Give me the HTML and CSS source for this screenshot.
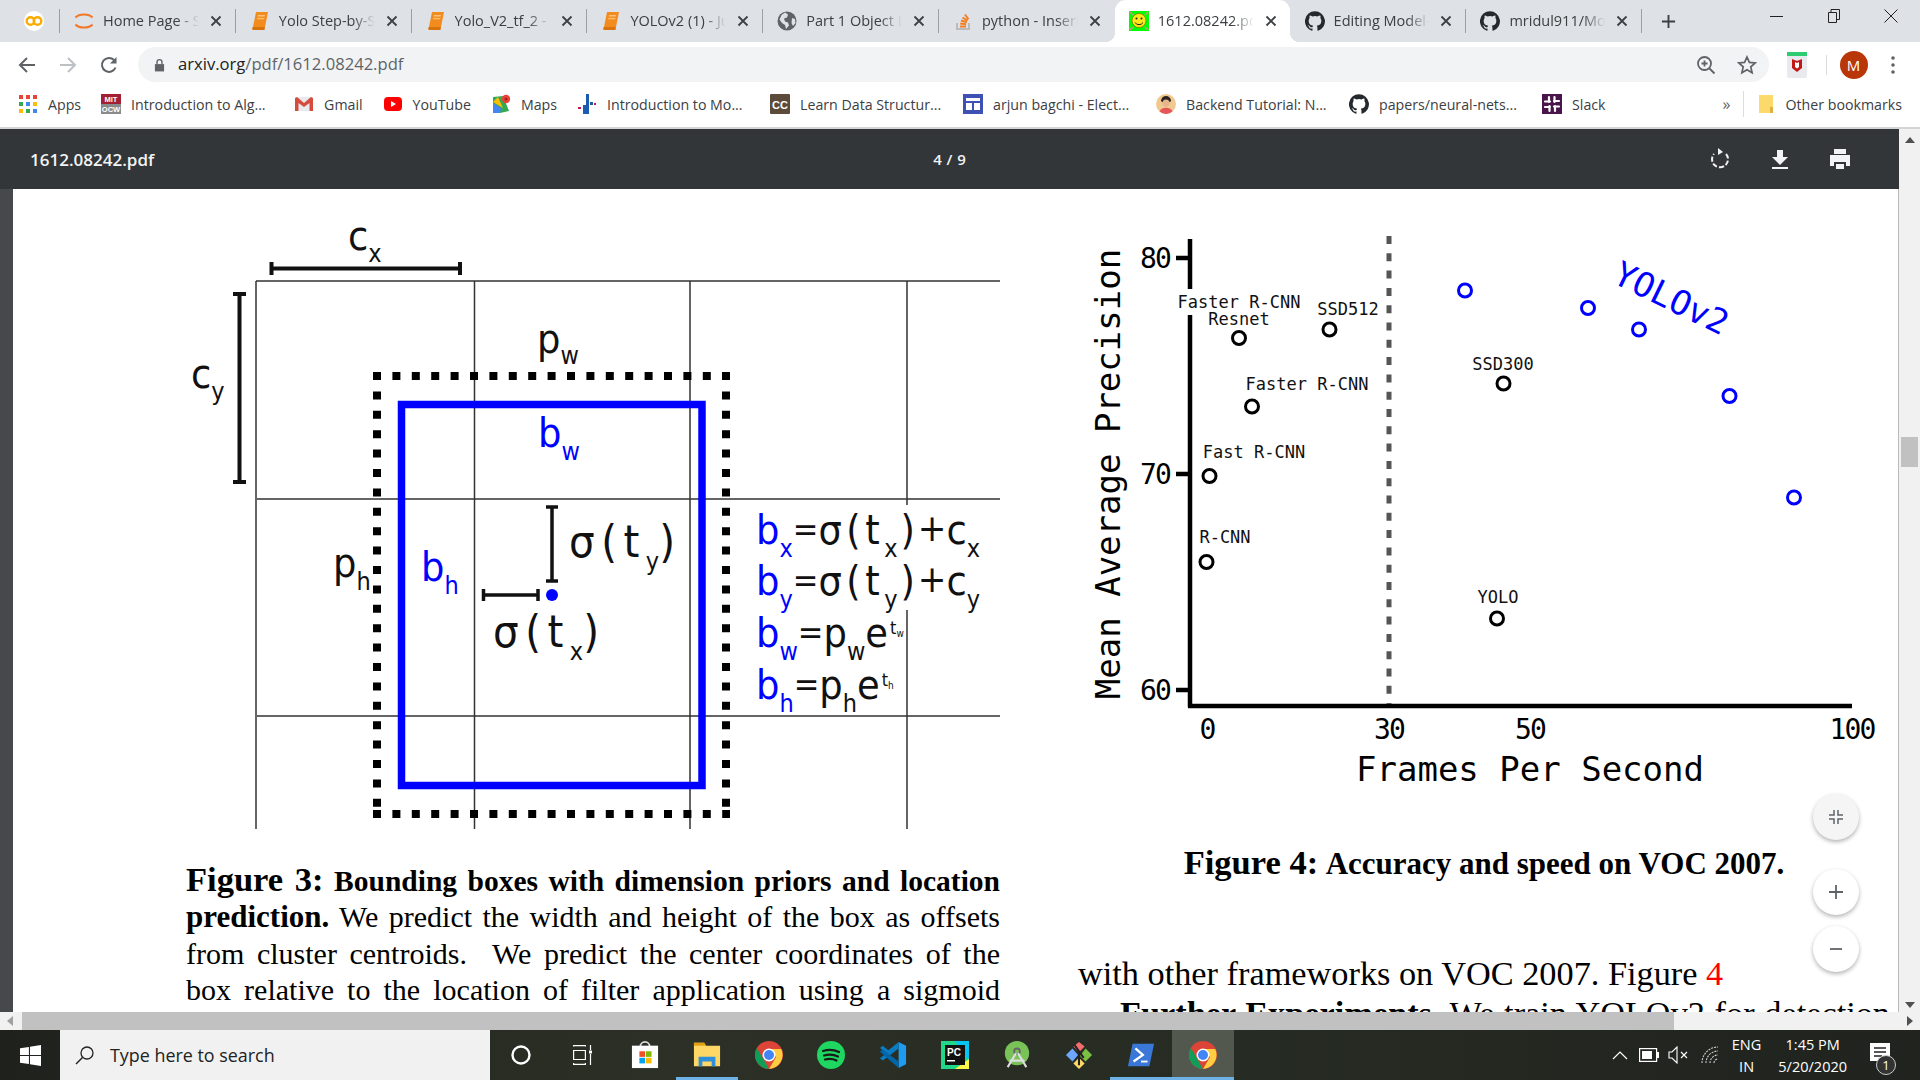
FILE: index.html
```html
<!DOCTYPE html>
<html lang="en">

<head>
    <meta charset="UTF-8">
    <meta name="viewport" content="width=device-width, initial-scale=1.0">
    <title>1612.08242.pdf</title>
    <link rel="stylesheet" href="styles.css">
</head>

<body>
    <svg class="defs" aria-hidden="true">
        <symbol id="gh" viewBox="0 0 24 24">
            <path fill="#24292e" d="M12 .3a12 12 0 0 0-3.8 23.4c.6.1.8-.3.8-.6v-2c-3.3.7-4-1.6-4-1.6-.5-1.4-1.3-1.8-1.3-1.8-1.1-.7.1-.7.1-.7 1.2.1 1.8 1.2 1.8 1.2 1.1 1.8 2.8 1.3 3.5 1 .1-.8.4-1.3.8-1.6-2.7-.3-5.5-1.3-5.5-5.9 0-1.3.5-2.4 1.2-3.2-.1-.3-.5-1.5.1-3.2 0 0 1-.3 3.3 1.2a11.5 11.5 0 0 1 6 0c2.3-1.5 3.3-1.2 3.3-1.2.6 1.7.2 2.9.1 3.2.8.8 1.2 1.9 1.2 3.2 0 4.6-2.8 5.6-5.5 5.9.4.4.8 1.1.8 2.2v3.3c0 .3.2.7.8.6A12 12 0 0 0 12 .3"/>
        </symbol>
        <symbol id="book" viewBox="0 0 20 20">
            <path fill="#f28c1e" d="M6 1h12l-3 15H3z"/>
            <path fill="#ffc27a" d="M8 4h7l-.3 1.500H7.700zM7.400 7h7l-.3 1.200H7.100z"/>
            <path fill="#d9730d" d="M3 16h12l-.5 3H3.500a1.600 1.600 0 0 1 -.5-3z"/>
        </symbol>
        <symbol id="chrome" viewBox="0 0 28 28">
            <circle cx="14" cy="14" r="14" fill="#db4437"/>
            <path fill="#0f9d58" d="M14 28A14 14 0 0 1 1.900 7l7 12 5 9z"/>
            <path fill="#ffcd40" d="M14 8h12.200A14 14 0 0 1 14 28l7-12z"/>
            <circle cx="14" cy="14" r="6.500" fill="#fff"/>
            <circle cx="14" cy="14" r="5" fill="#4285f4"/>
        </symbol>
        <symbol id="closex" viewBox="0 0 12 12">
            <path d="M1.500 1.500l9 9M10.500 1.500l-9 9" stroke="#3c4043" stroke-width="1.800" fill="none"/>
        </symbol>
    </svg>

    <div class="tabstrip">
        <div class="pinned">
            <svg class="tabicon" viewBox="0 0 20 20"><circle cx="10" cy="10" r="10" fill="#fff"/><circle cx="6.500" cy="10" r="3.800" fill="none" stroke="#f9ab00" stroke-width="2.400"/><circle cx="13.500" cy="10" r="3.800" fill="none" stroke="#f9ab00" stroke-width="2.400"/></svg>
        </div>
        <div class="tabsep"></div>
        <div class="tab">
            <svg class="tabicon" viewBox="0 0 20 20"><path d="M1.500 6.500a9.500 5.500 0 0 1 17 0M1.500 13.500a9.500 5.500 0 0 0 17 0" fill="none" stroke="#f37726" stroke-width="2"/></svg>
            <span class="tabtitle">Home Page - S</span>
            <svg class="tabclose"><use href="#closex"/></svg>
        </div>
        <div class="tabsep"></div>
        <div class="tab">
            <svg class="tabicon"><use href="#book"/></svg>
            <span class="tabtitle">Yolo Step-by-S</span>
            <svg class="tabclose"><use href="#closex"/></svg>
        </div>
        <div class="tabsep"></div>
        <div class="tab">
            <svg class="tabicon"><use href="#book"/></svg>
            <span class="tabtitle">Yolo_V2_tf_2 -</span>
            <svg class="tabclose"><use href="#closex"/></svg>
        </div>
        <div class="tabsep"></div>
        <div class="tab">
            <svg class="tabicon"><use href="#book"/></svg>
            <span class="tabtitle">YOLOv2 (1) - Ju</span>
            <svg class="tabclose"><use href="#closex"/></svg>
        </div>
        <div class="tabsep"></div>
        <div class="tab">
            <svg class="tabicon" viewBox="0 0 20 20"><circle cx="10" cy="10" r="9.500" fill="#5f6368"/><path fill="#dee1e6" d="M8 1.500l3 2-1 3-3 1 1 3 3 1 1 3-3 3.500-1-4-3-2-2.500-3.500 2-4.500zM15 7l3 1 .5 4-2.500 3-1.500-3z"/></svg>
            <span class="tabtitle">Part 1 Object D</span>
            <svg class="tabclose"><use href="#closex"/></svg>
        </div>
        <div class="tabsep"></div>
        <div class="tab">
            <svg class="tabicon" viewBox="0 0 20 20"><path fill="none" stroke="#bcbbbb" stroke-width="2" d="M4 12v6h12v-6"/><path fill="none" stroke="#f48024" stroke-width="2" d="M7 15.500h6M7.200 12.500l6 .8M8 9.500l5.800 1.800M9.500 6.500l5 3.200M12 3.500l3.500 4.800"/></svg>
            <span class="tabtitle">python - Insert</span>
            <svg class="tabclose"><use href="#closex"/></svg>
        </div>
        <div class="tabsep tabsep-off"></div>
        <div class="tab tab-active">
            <svg class="tabicon" viewBox="0 0 20 20"><rect width="20" height="20" fill="#0f0"/><circle cx="10" cy="9.500" r="7" fill="#ffe81a" stroke="#8a7a00" stroke-width=".8"/><circle cx="7.500" cy="7.500" r="1" fill="#222"/><circle cx="12.500" cy="7.500" r="1" fill="#222"/><path d="M6 11.500a4.500 4 0 0 0 8 0" fill="none" stroke="#222" stroke-width="1"/><path d="M1 1l3 3M19 1l-3 3M1 19l3-3M19 19l-3-3" stroke="#c98" stroke-width="1.500"/></svg>
            <span class="tabtitle">1612.08242.pd</span>
            <svg class="tabclose"><use href="#closex"/></svg>
        </div>
        <div class="tabsep tabsep-off"></div>
        <div class="tab">
            <svg class="tabicon"><use href="#gh"/></svg>
            <span class="tabtitle">Editing Model-</span>
            <svg class="tabclose"><use href="#closex"/></svg>
        </div>
        <div class="tabsep"></div>
        <div class="tab">
            <svg class="tabicon"><use href="#gh"/></svg>
            <span class="tabtitle">mridul911/Mo</span>
            <svg class="tabclose"><use href="#closex"/></svg>
        </div>
        <div class="tabsep"></div>
        <svg class="newtab" viewBox="0 0 16 16"><path d="M8 1v14M1 8h14" stroke="#3c4043" stroke-width="2"/></svg>
        <div class="winctl">
            <svg viewBox="0 0 14 14"><path d="M0 7.500h13" stroke="#222" stroke-width="1"/></svg>
            <svg viewBox="0 0 14 14"><path d="M1.500 3.500h8v10h-8zM4 3.500V.5h8.500v10H9.500" fill="none" stroke="#222" stroke-width="1"/></svg>
            <svg viewBox="0 0 14 14"><path d="M.5.500l13 13M13.500.5l-13 13" stroke="#222" stroke-width="1"/></svg>
        </div>
    </div>

    <div class="toolbar">
        <svg class="navicon" viewBox="0 0 18 18"><path d="M17 9H2M9 2L2 9l7 7" fill="none" stroke="#5f6368" stroke-width="2"/></svg>
        <svg class="navicon" viewBox="0 0 18 18"><path d="M1 9h15M9 2l7 7-7 7" fill="none" stroke="#bdc1c6" stroke-width="2"/></svg>
        <svg class="navicon" viewBox="0 0 18 18"><path d="M15.500 11.500A7 7 0 1 1 14 4" fill="none" stroke="#5f6368" stroke-width="2"/><path d="M16.500 1v6.500H10z" fill="#5f6368"/></svg>
        <div class="omnibox">
            <svg class="lock" viewBox="0 0 12 14"><path d="M1 6h10v8H1z" fill="#5f6368"/><path d="M3.300 6V3.800a2.700 2.700 0 0 1 5.400 0V6" fill="none" stroke="#5f6368" stroke-width="1.500"/></svg>
            <span class="url"><span class="url-host">arxiv.org</span>/pdf/1612.08242.pdf</span>
            <svg class="omniicon zoomicon" viewBox="0 0 20 20"><circle cx="8.500" cy="8.500" r="6.500" fill="none" stroke="#5f6368" stroke-width="1.800"/><path d="M13 13l5.500 5.500M8.500 5.500v6M5.500 8.500h6" stroke="#5f6368" stroke-width="1.800"/></svg>
            <svg class="omniicon" viewBox="0 0 20 20"><path d="M10 2l2.400 5.400 5.800.6-4.400 3.900 1.300 5.800L10 14.700l-5.100 3 1.300-5.800L1.800 8l5.800-.6z" fill="none" stroke="#5f6368" stroke-width="1.700"/></svg>
        </div>
        <svg class="mcafee" viewBox="0 0 20 26"><rect width="20" height="26" rx="2" fill="#e8eaed"/><rect width="20" height="4" fill="#2ecc71"/><path d="M5 7l5 2 5-2v9l-5 4-5-4z" fill="#c01818"/><path d="M8 10v5l2 1.500 2-1.500v-5l-2 1z" fill="#fff"/></svg>
        <div class="toolsep"></div>
        <div class="avatar">M</div>
        <svg class="dots" viewBox="0 0 4 18"><circle cx="2" cy="2" r="1.800" fill="#5f6368"/><circle cx="2" cy="9" r="1.800" fill="#5f6368"/><circle cx="2" cy="16" r="1.800" fill="#5f6368"/></svg>
    </div>

    <div class="bookmarks">
        <a class="bm">
            <svg class="bmicon" viewBox="0 0 20 20">
                <g fill="#ea4335"><rect x="1" y="1" width="4" height="4"/><rect x="8" y="1" width="4" height="4"/><rect x="15" y="1" width="4" height="4"/></g>
                <g fill="#fbbc04"><rect x="15" y="8" width="4" height="4"/><rect x="1" y="15" width="4" height="4"/></g>
                <g fill="#34a853"><rect x="1" y="8" width="4" height="4"/><rect x="8" y="15" width="4" height="4"/></g>
                <g fill="#4285f4"><rect x="8" y="8" width="4" height="4"/><rect x="15" y="15" width="4" height="4"/></g>
            </svg>
            <span>Apps</span>
        </a>
        <a class="bm bm-long">
            <svg class="bmicon" viewBox="0 0 20 20"><rect width="20" height="10" fill="#a31f34"/><rect y="10" width="20" height="10" fill="#8a8b8c"/><text x="10" y="8" class="mit">MIT</text><text x="10" y="18" class="mit">OCW</text></svg>
            <span>Introduction to Alg...</span>
        </a>
        <a class="bm">
            <svg class="bmicon" viewBox="0 0 20 20"><path fill="#e8eaed" d="M2 3h16v14H2z"/><path fill="#d54c3f" d="M1 4v13h3.500V9l5.500 4 5.500-4v8H19V4l-2-1-7 6-7-6z"/></svg>
            <span>Gmail</span>
        </a>
        <a class="bm">
            <svg class="bmicon" viewBox="0 0 20 20"><rect x="1" y="3" width="18" height="14" rx="4" fill="#f00"/><path d="M8 7l5 3-5 3z" fill="#fff"/></svg>
            <span>YouTube</span>
        </a>
        <a class="bm">
            <svg class="bmicon" viewBox="0 0 20 20"><path fill="#34a853" d="M2 3l10-1 6 15-9 2-7-4z"/><path fill="#4285f4" d="M2 19V9l8 5-1 5z"/><path fill="#fbbc04" d="M2 8l5-5 5 11z"/><circle cx="15" cy="5" r="4.200" fill="#ea4335"/><circle cx="15" cy="5" r="1.500" fill="#a31f1f"/></svg>
            <span>Maps</span>
        </a>
        <a class="bm bm-long">
            <svg class="bmicon" viewBox="0 0 20 20"><rect x="9" y="0" width="3" height="20" fill="#1a5db0"/><rect x="6" y="11" width="3" height="9" fill="#1a5db0"/><rect x="13" y="8" width="3" height="3" fill="#1a5db0"/><rect x="1" y="13" width="3" height="2" fill="#c2185b"/><rect x="17" y="9" width="2" height="2" fill="#c2185b"/></svg>
            <span>Introduction to Mo...</span>
        </a>
        <a class="bm bm-long">
            <svg class="bmicon" viewBox="0 0 20 20"><rect width="20" height="20" rx="1" fill="#5c4a3a"/><text x="10" y="14.500" class="cc">CC</text></svg>
            <span>Learn Data Structur...</span>
        </a>
        <a class="bm bm-long">
            <svg class="bmicon" viewBox="0 0 20 20"><rect width="20" height="20" fill="#3f51b5"/><rect x="3" y="4" width="14" height="3" fill="#fff"/><rect x="3" y="9" width="6" height="7" fill="#fff"/><rect x="11" y="9" width="6" height="7" fill="#fff"/></svg>
            <span>arjun bagchi - Elect...</span>
        </a>
        <a class="bm bm-long">
            <svg class="bmicon" viewBox="0 0 20 20"><circle cx="10" cy="10" r="10" fill="#f0c890"/><path d="M5 7a5 5 0 0 1 10 0l-1 1H6z" fill="#2d2420"/><circle cx="10" cy="9" r="3.500" fill="#e8b48c"/><path d="M3.500 17.500a7 6 0 0 1 13 0 10 10 0 0 1-13 0" fill="#e5555a"/></svg>
            <span>Backend Tutorial: N...</span>
        </a>
        <a class="bm bm-long">
            <svg class="bmicon"><use href="#gh"/></svg>
            <span>papers/neural-nets...</span>
        </a>
        <a class="bm">
            <svg class="bmicon" viewBox="0 0 20 20"><rect width="20" height="20" fill="#4a154b"/><path d="M7 3v5M13 12v5M3 13h5M12 7h5M8 7.500H3M17 12.500h-5M7.500 17v-5M12.500 3v5" stroke="#fff" stroke-width="2.200" stroke-linecap="round"/></svg>
            <span>Slack</span>
        </a>
        <span class="bmmore">»</span>
        <div class="toolsep bmsep"></div>
        <a class="bm bm-other">
            <svg class="bmicon" viewBox="0 0 20 20"><path d="M3 1h7l7 0v18H3z" fill="#fbd96b"/><path d="M14 13h3v6h-3z" fill="#e0b040"/></svg>
            <span>Other bookmarks</span>
        </a>
    </div>
    <div class="chromeline"></div>

    <div class="viewerwrap">
        <div class="viewer">
            <div class="pdfbar">
                <span class="pdfname">1612.08242.pdf</span>
                <span class="pdfpage">4 / 9</span>
                <div class="pdfactions">
                    <svg viewBox="0 0 20 24"><path d="M16 7a8 8 0 1 1-12 0" fill="none" stroke="#f1f3f4" stroke-width="2" stroke-dasharray="5 2"/><path d="M8 1l5 4-5 3z" fill="#f1f3f4"/></svg>
                    <svg viewBox="0 0 20 24"><path d="M7 3h6v7h5l-8 8-8-8h5z" fill="#f1f3f4"/><rect x="2" y="20" width="16" height="2" fill="#f1f3f4"/></svg>
                    <svg viewBox="0 0 20 24"><path d="M4 2h12v5H4z" fill="#f1f3f4"/><path d="M0 8h20v11h-4v-4H4v4H0z" fill="#f1f3f4"/><path d="M6 17h8v5H6z" fill="#f1f3f4"/></svg>
                </div>
            </div>
            <div class="pagearea">
                <div class="page">
                    <div class="col col-left">
                        <svg class="fig fig3" viewBox="186 189 820 673">
                            <!-- grid -->
                            <g class="grid">
                                <path d="M256 281V829M474.500 281V829M690 281V829M907 281V505M907 610V829"/>
                                <path d="M256 281H1000M257 499H1000M257 716H1000"/>
                            </g>
                            <!-- brackets -->
                            <path class="bracket" d="M271.500 262v13M271.500 268.500H460M460 262v13M233 294h13M239.500 294V482M233 482h13"/>
                            <path class="bracket thin" d="M546 507h12M552 507V581M546 581h12M483.500 589v12M483.500 595H538M538 589v12"/>
                            <!-- prior and predicted box -->
                            <path class="prior" d="M373 376H730M373 814H730M377 372V818M726 372V818"/>
                            <rect class="pred" x="401.500" y="404.500" width="300.500" height="381"/>
                            <circle class="center" cx="552" cy="595" r="6"/>

                            <text class="m" x="348" y="250">c<tspan class="s" dy="12">x</tspan></text>
                            <text class="m" x="191" y="388">c<tspan class="s" dy="12">y</tspan></text>
                            <text class="m" x="537" y="353">p<tspan class="s" dy="11">w</tspan></text>
                            <text class="m blue" x="538" y="447">b<tspan class="s" dy="13">w</tspan></text>
                            <text class="m" x="333" y="577">p<tspan class="s" dy="13">h</tspan></text>
                            <text class="m blue" x="421" y="581">b<tspan class="s" dy="13">h</tspan></text>
                            <text class="m big" x="569" y="557">σ(t<tspan class="s" dy="13">y</tspan><tspan dy="-13">)</tspan></text>
                            <text class="m big" x="493" y="647">σ(t<tspan class="s" dy="13">x</tspan><tspan dy="-13">)</tspan></text>

                            <text class="m" x="756" y="544"><tspan class="blue">b</tspan><tspan class="s blue" dy="13">x</tspan><tspan class="op" dy="-16">=</tspan><tspan class="sp" dy="3">σ(t</tspan><tspan class="s" dy="13">x</tspan><tspan dx="3" dy="-13">)</tspan><tspan class="op plus" dx="3" dy="-3">+</tspan><tspan dy="3">c</tspan><tspan class="s" dy="13">x</tspan></text>
                            <text class="m" x="756" y="595"><tspan class="blue">b</tspan><tspan class="s blue" dy="13">y</tspan><tspan class="op" dy="-16">=</tspan><tspan class="sp" dy="3">σ(t</tspan><tspan class="s" dy="13">y</tspan><tspan dx="3" dy="-13">)</tspan><tspan class="op plus" dx="3" dy="-3">+</tspan><tspan dy="3">c</tspan><tspan class="s" dy="13">y</tspan></text>
                            <text class="m" x="756" y="647"><tspan class="blue">b</tspan><tspan class="s blue" dy="13">w</tspan><tspan class="op" dy="-16">=</tspan><tspan dy="3">p</tspan><tspan class="s" dy="13">w</tspan><tspan dy="-13">e</tspan><tspan class="e" dx="2" dy="-13">t</tspan><tspan class="ee" dy="3">w</tspan></text>
                            <text class="m" x="756" y="699"><tspan class="blue">b</tspan><tspan class="s blue" dy="13">h</tspan><tspan class="op" dy="-16">=</tspan><tspan dy="3">p</tspan><tspan class="s" dy="13">h</tspan><tspan dy="-13">e</tspan><tspan class="e" dx="2" dy="-13">t</tspan><tspan class="ee" dy="3">h</tspan></text>
                        </svg>
                        <p class="caption cap3">
                            <span class="ln"><b class="figlabel">Figure 3:</b> <b class="figtitle">Bounding boxes with dimension priors and location</b></span>
                            <span class="ln"><b class="lead">prediction.</b> We predict the width and height of the box as offsets</span>
                            <span class="ln">from cluster centroids. &nbsp;We predict the center coordinates of the</span>
                            <span class="ln">box relative to the location of filter application using a sigmoid</span>
                        </p>
                    </div>
                    <div class="col col-right">
                        <svg class="fig fig4" viewBox="1078 189 820 656">
                            <path class="axis" d="M1190 239V707M1188 706H1852M1176 258H1190M1176 474H1190M1176 690H1190"/>
                            <path class="dash" d="M1389 236V704"/>
                            <rect class="erase" x="1178" y="289" width="124" height="26"/>

                            <text class="tick" x="1155" y="268">80</text>
                            <text class="tick" x="1155" y="484">70</text>
                            <text class="tick" x="1155" y="700">60</text>
                            <text class="tick" x="1207" y="739">0</text>
                            <text class="tick" x="1389" y="739">30</text>
                            <text class="tick" x="1530" y="739">50</text>
                            <text class="tick" x="1852" y="739">100</text>
                            <text class="axlabel" x="1530" y="781">Frames Per Second</text>
                            <text class="axlabel" transform="translate(1120 474) rotate(-90)">Mean Average Precision</text>

                            <text class="lbl" x="1239" y="308">Faster R-CNN</text>
                            <text class="lbl" x="1239" y="325">Resnet</text>
                            <text class="lbl" x="1348" y="315">SSD512</text>
                            <text class="lbl" x="1503" y="370">SSD300</text>
                            <text class="lbl" x="1307" y="390">Faster R-CNN</text>
                            <text class="lbl" x="1254" y="458">Fast R-CNN</text>
                            <text class="lbl" x="1225" y="543">R-CNN</text>
                            <text class="lbl" x="1498" y="603">YOLO</text>

                            <g class="pts">
                                <circle cx="1239" cy="338" r="6.500"/>
                                <circle cx="1329.500" cy="329.500" r="6.500"/>
                                <circle cx="1252" cy="406.500" r="6.500"/>
                                <circle cx="1209.500" cy="476" r="6.500"/>
                                <circle cx="1206.500" cy="562" r="6.500"/>
                                <circle cx="1503.500" cy="383.500" r="6.500"/>
                                <circle cx="1497" cy="618.500" r="6.500"/>
                            </g>
                            <g class="pts pts-blue">
                                <circle cx="1465" cy="290.500" r="6.500"/>
                                <circle cx="1588" cy="308" r="6.500"/>
                                <circle cx="1639" cy="329.500" r="6.500"/>
                                <circle cx="1729.500" cy="396" r="6.500"/>
                                <circle cx="1794" cy="497.500" r="6.500"/>
                            </g>
                            <text class="yolo2" transform="translate(1611 282) rotate(26)">YOLOv2</text>
                        </svg>
                        <p class="caption cap4"><b class="figlabel">Figure 4:</b> <b class="figtitle">Accuracy and speed on VOC 2007.</b></p>
                        <p class="bodytext">with other frameworks on VOC 2007. Figure <span class="ref">4</span></p>
                        <p class="bodytext further"><b>Further Experiments.</b> We train YOLOv2 for detection</p>
                    </div>
                </div>
                <div class="fabs">
                    <div class="fab fab-fit"><svg viewBox="0 0 16 16"><path d="M6 1v5H1M10 1v5h5M6 15v-5H1M10 15v-5h5" fill="none" stroke="#5f6368" stroke-width="1.500"/></svg></div>
                    <div class="fab fab-plus"><svg viewBox="0 0 16 16"><path d="M8 1v14M1 8h14" stroke="#5f6368" stroke-width="1.800"/></svg></div>
                    <div class="fab fab-minus"><svg viewBox="0 0 16 16"><path d="M2 8h12" stroke="#5f6368" stroke-width="1.800"/></svg></div>
                </div>
            </div>
        </div>
        <div class="vscroll">
            <div class="arrow-up"></div>
            <div class="vthumb"></div>
            <div class="arrow-down"></div>
        </div>
    </div>

    <div class="hscroll">
        <div class="arrow-left"></div>
        <div class="hthumb"></div>
        <div class="arrow-right"></div>
    </div>

    <div class="taskbar">
        <div class="startbtn">
            <svg viewBox="0 0 20 20"><path fill="#fff" d="M0 3l8.500-1.200v7.700H0zM9.500 1.600L20 0v9.500H9.500zM0 10.500h8.500v7.700L0 17zM9.500 10.500H20V20L9.500 18.400z"/></svg>
        </div>
        <div class="searchbox">
            <svg viewBox="0 0 20 20"><circle cx="12" cy="8" r="6" fill="none" stroke="#222" stroke-width="1.300"/><path d="M7.500 12.500L1 19" stroke="#222" stroke-width="1.500"/></svg>
            <span>Type here to search</span>
        </div>
        <div class="taskicons">
            <div class="ti"><svg class="ti-s" viewBox="0 0 20 20"><circle cx="10" cy="10" r="8.500" fill="none" stroke="#fff" stroke-width="2.400"/></svg></div>
            <div class="ti"><svg class="ti-s" viewBox="0 0 20 20"><path fill="none" stroke="#fff" stroke-width="1.200" d="M0 .6h13M.6 0v1.500M12.400 0v1.500M.6 5.500h11.800v9H.6zM0 19.400h13M.6 18v1.400M12.400 18v1.400M17.500 0v5M17.500 9v11"/><rect x="16" y="5.500" width="3" height="3" fill="#fff"/></svg></div>
            <div class="ti"><svg class="ti-l" viewBox="0 0 30 30"><path d="M10 6a5 5 0 0 1 10 0" fill="none" stroke="#ddd" stroke-width="2"/><path d="M1 5h28v24H1z" fill="#fff"/><rect x="9" y="11" width="6" height="6" fill="#f25022"/><rect x="16" y="11" width="6" height="6" fill="#7fba00"/><rect x="9" y="18" width="6" height="6" fill="#00a4ef"/><rect x="16" y="18" width="6" height="6" fill="#ffb900"/></svg></div>
            <div class="ti ti-open"><svg class="ti-l" viewBox="0 0 30 30"><path d="M1 2h11l2 3h15v22H1z" fill="#ffd766"/><path d="M1 2h11l2 3H1z" fill="#e0a010"/><path d="M6 27V17h18v10h-4v-5H10v5z" fill="#2f8fd8"/></svg></div>
            <div class="ti"><svg class="ti-l"><use href="#chrome"/></svg></div>
            <div class="ti"><svg class="ti-l" viewBox="0 0 28 28"><circle cx="14" cy="14" r="14" fill="#1ed760"/><path d="M6 10c6-2 11-1.500 16 1M7 14.500c5-1.500 10-1 14 1M8 18.500c4-1 8-.8 11.500 1" fill="none" stroke="#1a1a1a" stroke-width="2.200" stroke-linecap="round"/></svg></div>
            <div class="ti"><svg class="ti-l" viewBox="0 0 30 30"><path d="M21 1l8 4v20l-8 4z" fill="#1f9cf0"/><path d="M21 1v7L10 16.500 4 21l-3-2.500 7-5.500-7-5.500L4 5l6 5z" fill="#0a7cc4"/><path d="M21 29v-7L4 9 1 11.500 21 29z" fill="#0065a9"/></svg></div>
            <div class="ti"><svg class="ti-l" viewBox="0 0 28 28"><path d="M0 0h28v28H0z" fill="#21d789"/><path d="M14 0h14v20z" fill="#07c3f2"/><path d="M28 18v10H14z" fill="#fcf84a"/><rect x="4" y="4" width="20" height="20" fill="#111"/><text x="6" y="14.500" class="pc">PC</text><rect x="6" y="19" width="8" height="1.500" fill="#fff"/></svg></div>
            <div class="ti"><svg class="ti-l" viewBox="0 0 30 30"><circle cx="15" cy="13" r="13" fill="#78c257"/><circle cx="15" cy="11" r="3" fill="none" stroke="#666" stroke-width="2"/><path d="M14 13L5 28M16 13l9 15M7 21h16" stroke="#ddd" stroke-width="2.200"/></svg></div>
            <div class="ti"><svg class="ti-l" viewBox="0 0 30 30"><path d="M15 1l6 5-6 6-6-6z" fill="#f46d6d"/><path d="M22 8l7 7-7 7-6-6z" fill="#7ac143"/><path d="M8 8l6 7-6 7-7-7z" fill="#6ea8fe"/><path d="M15 18l6 6-6 6-6-6z" fill="#ffd966"/><path d="M10 4l10 14M15 12v14" stroke="#222" stroke-width="2.200"/></svg></div>
            <div class="ti ti-open"><svg class="ti-l" viewBox="0 0 30 28"><path d="M6 2h23l-5 24H1z" fill="#3a78d8"/><path d="M9 7l8 7-10 7" fill="none" stroke="#fff" stroke-width="2.400"/><path d="M15 21h7" stroke="#fff" stroke-width="2"/></svg></div>
            <div class="ti ti-open ti-active"><svg class="ti-l"><use href="#chrome"/></svg></div>
        </div>
        <div class="tray">
            <svg class="caret" viewBox="0 0 16 10"><path d="M1 9l7-7 7 7" fill="none" stroke="#fff" stroke-width="1.200"/></svg>
            <svg class="battery" viewBox="0 0 20 14"><rect x=".6" y=".6" width="17" height="12.800" fill="none" stroke="#fff" stroke-width="1.200"/><rect x="3" y="3" width="10" height="8" fill="#fff"/><rect x="18" y="4" width="2" height="6" fill="#fff"/></svg>
            <svg class="speaker" viewBox="0 0 20 18"><path d="M1 6h3l5-5v16l-5-5H1z" fill="none" stroke="#fff" stroke-width="1.100"/><path d="M13 6l6 6M19 6l-6 6" stroke="#fff" stroke-width="1.100"/></svg>
            <svg class="wifi" viewBox="0 0 18 18"><path d="M1 17A16 16 0 0 1 17 1M5 17A12 12 0 0 1 17 5M9 17a8 8 0 0 1 8-8M13 17a4 4 0 0 1 4-4" fill="none" stroke="#ccc" stroke-width="1.100" stroke-dasharray="2 1"/></svg>
            <div class="lang"><span>ENG</span><span>IN</span></div>
            <div class="clock"><span>1:45 PM</span><span>5/20/2020</span></div>
            <div class="notif">
                <svg viewBox="0 0 20 20"><path d="M0 0h20v18H0z" fill="#fff"/><path d="M4 5h12M4 9h12M4 13h8" stroke="#222" stroke-width="1.400"/></svg>
                <span class="badge">1</span>
            </div>
        </div>
    </div>
</body>

</html>
```

FILE: styles.css
```css
* {
    box-sizing: border-box;
}

html,
body {
    margin: 0;
    padding: 0;
    width: 1920px;
    height: 1080px;
    overflow: hidden;
    font-family: "Open Sans", "Noto Sans", sans-serif;
    background: #fff;
}

.defs {
    width: 0;
    height: 0;
    display: block;
}

/* tabs */
.tabstrip {
    height: 42px;
    background: #dee1e6;
    display: flex;
    align-items: center;
}

.pinned {
    width: 59px;
    height: 42px;
    display: flex;
    align-items: center;
    padding-left: 24px;
}

.tab {
    width: 174.800px;
    height: 42px;
    display: flex;
    align-items: center;
    padding: 0 13px 0 14px;
    position: relative;
    flex: none;
}

.tabsep {
    width: 1px;
    height: 24px;
    background: #9aa0a6;
    flex: none;
}

.tabsep-off {
    background: transparent;
}

.tab-active {
    background: #fff;
    border-radius: 11px 11px 0 0;
}

.tab-active::before,
.tab-active::after {
    content: "";
    position: absolute;
    bottom: 0;
    width: 10px;
    height: 10px;
}

.tab-active::before {
    left: -10px;
    background: radial-gradient(circle at 0 0, transparent 10px, #fff 10.500px);
}

.tab-active::after {
    right: -10px;
    background: radial-gradient(circle at 100% 0, transparent 10px, #fff 10.500px);
}

.tabicon {
    width: 20px;
    height: 20px;
    flex: none;
    margin-right: 9px;
}

.tabtitle {
    flex: 1;
    min-width: 0;
    font-size: 14.500px;
    color: #3c4043;
    white-space: nowrap;
    overflow: hidden;
    padding-bottom: 2px;
    -webkit-mask-image: linear-gradient(to right, #000 calc(100% - 22px), transparent 100%);
    mask-image: linear-gradient(to right, #000 calc(100% - 22px), transparent 100%);
}

.tabclose {
    width: 12px;
    height: 12px;
    flex: none;
    margin-left: 11px;
}

.newtab {
    width: 15px;
    height: 15px;
    margin-left: 19px;
    flex: none;
}

.winctl {
    margin-left: auto;
    display: flex;
    gap: 43px;
    padding-right: 22px;
    margin-bottom: 10px;
}

.winctl svg {
    width: 14px;
    height: 14px;
}

/* toolbar */
.toolbar {
    height: 43px;
    background: #fff;
    display: flex;
    align-items: center;
    padding: 2px 0 0 18px;
    position: relative;
}

.navicon {
    width: 18px;
    height: 18px;
    flex: none;
    margin-right: 23px;
}

.omnibox {
    width: 1630.500px;
    height: 35px;
    margin-left: -3px;
    background: #f1f3f4;
    border-radius: 18px;
    display: flex;
    align-items: center;
    padding: 0 12px 0 16px;
}

.lock {
    width: 11px;
    height: 14px;
    margin-right: 13px;
}

.url {
    font-size: 16.600px;
    color: #5f6368;
    flex: 1;
    margin-top: -2px;
}

.url-host {
    color: #202124;
}

.omniicon {
    width: 20px;
    height: 20px;
    margin-left: 21px;
}

.mcafee {
    width: 20px;
    height: 26px;
    margin-left: 18px;
    flex: none;
}

.toolsep {
    width: 1px;
    height: 20px;
    background: #dadce0;
    margin-left: 19px;
    flex: none;
}

.avatar {
    width: 28px;
    height: 28px;
    border-radius: 50%;
    background: #b83608;
    color: #fff;
    font-size: 15px;
    display: flex;
    align-items: center;
    justify-content: center;
    margin-left: 13px;
    flex: none;
}

.dots {
    width: 4px;
    height: 18px;
    margin-left: 23px;
    flex: none;
}

/* bookmarks */
.bookmarks {
    height: 42px;
    background: #fff;
    display: flex;
    align-items: center;
    padding-left: 18px;
    gap: 20px;
    padding-bottom: 4px;
}

.bm {
    display: flex;
    align-items: center;
    gap: 10px;
    font-size: 14.200px;
    color: #3c4043;
    white-space: nowrap;
    flex: none;
}

.bm-long span {
    width: 143px;
}

.bmicon {
    width: 20px;
    height: 20px;
    flex: none;
}

.mit {
    font: bold 7.500px "Liberation Sans", sans-serif;
    fill: #fff;
    text-anchor: middle;
}

.cc {
    font: bold 11px "Liberation Sans", sans-serif;
    fill: #fff;
    text-anchor: middle;
}

.pc {
    font: bold 10px "Liberation Sans", sans-serif;
    fill: #fff;
}

.bmmore {
    margin-left: auto;
    font-size: 16px;
    color: #5f6368;
}

.bmsep {
    margin-left: -8px;
    height: 26px;
}

.bm-other {
    margin-left: -8px;
    padding-right: 18px;
}

.chromeline {
    height: 2px;
    background: #d4d4d4;
}

/* pdf viewer */
.viewerwrap {
    height: 883px;
    display: flex;
}

.viewer {
    flex: 1;
    display: flex;
    flex-direction: column;
    min-width: 0;
}

.pdfbar {
    height: 60px;
    background: #323639;
    display: flex;
    align-items: center;
    padding: 0 49.500px 0 30px;
    position: relative;
    color: #f1f3f4;
}

.pdfname {
    font-size: 17px;
    font-weight: 600;
}

.pdfpage {
    margin-left: 779px;
    font-size: 15px;
    font-weight: 600;
    letter-spacing: .5px;
}

.pdfactions {
    margin-left: auto;
    display: flex;
    gap: 40px;
}

.pdfactions svg {
    width: 20px;
    height: 24px;
}

.pagearea {
    flex: 1;
    display: flex;
    background: #45494c;
    padding-left: 13px;
    position: relative;
    min-height: 0;
}

.page {
    flex: 1;
    background: #fff;
    display: flex;
    padding-left: 173px;
    overflow: hidden;
    border-right: 1px solid #bbb;
}

.col-left {
    width: 814px;
    flex: none;
}

.col-right {
    width: 812px;
    margin-left: 78px;
    flex: none;
}

.fig {
    display: block;
}

.fig3 {
    width: 820px;
    height: 673px;
}

.fig4 {
    width: 820px;
    height: 656px;
}

/* figure 3 */
.grid path {
    fill: none;
    stroke: #333;
    stroke-width: 1.500px;
}

.erase {
    fill: #fff;
}

.bracket {
    fill: none;
    stroke: #111;
    stroke-width: 4px;
}

.bracket.thin {
    stroke-width: 3.500px;
}

.prior {
    fill: none;
    stroke: #000;
    stroke-width: 8px;
    stroke-dasharray: 8 11.400;
}

.pred {
    fill: none;
    stroke: #00f;
    stroke-width: 7.500px;
}

.center {
    fill: #00f;
}

.m {
    font-family: "DejaVu Sans", sans-serif;
    font-stretch: condensed;
    font-size: 41px;
    fill: #111;
}

.sp {
    letter-spacing: 4.500px;
}

.big {
    font-size: 45px;
    letter-spacing: 6.500px;
}

.s {
    font-size: 25px;
    letter-spacing: 0;
}

.op {
    font-size: 34px;
    fill: #111;
}

.plus {
    font-size: 38px;
}

.e {
    font-size: 18px;
}

.ee {
    font-size: 10px;
}

.blue {
    fill: #00f;
}

/* figure 4 */
.axis {
    fill: none;
    stroke: #000;
    stroke-width: 4.500px;
}

.dash {
    fill: none;
    stroke: #555;
    stroke-width: 5px;
    stroke-dasharray: 8 9.300;
}

.tick {
    font-family: "DejaVu Sans Mono", monospace;
    font-size: 28px;
    letter-spacing: -1.900px;
    text-anchor: middle;
    fill: #000;
}

.axlabel {
    font-family: "DejaVu Sans Mono", monospace;
    font-size: 34px;
    text-anchor: middle;
    fill: #000;
}

.lbl {
    font-family: "DejaVu Sans Mono", monospace;
    font-size: 17px;
    text-anchor: middle;
    fill: #111;
}

.pts circle {
    fill: none;
    stroke: #000;
    stroke-width: 3px;
}

.pts-blue circle {
    stroke: #00f;
}

.yolo2 {
    font-family: "DejaVu Sans Mono", monospace;
    font-size: 34px;
    fill: #00f;
}

/* paper text */
.caption,
.bodytext {
    font-family: "Liberation Serif", "Times New Roman", serif;
    color: #000;
    margin: 0;
}

.caption {
    font-size: 30px;
    line-height: 36.400px;
}

.cap3 .ln {
    display: block;
    white-space: nowrap;
    text-align: justify;
    text-align-last: justify;
}

.cap3 .figtitle {
    font-size: 29.500px;
}

.cap4 {
    text-align: center;
}

.caption b {
    line-height: 1;
}

.figlabel {
    font-size: 34.500px;
}

.figtitle,
.lead {
    font-size: 31px;
}

.bodytext {
    font-size: 34.300px;
    line-height: 40px;
    white-space: nowrap;
}

.cap4 + .bodytext {
    margin-top: 71px;
}

.further {
    padding-left: 42px;
    white-space: normal;
    text-align: justify;
    text-align-last: justify;
}

.ref {
    color: #f00;
}

.fabs {
    position: absolute;
    right: 40px;
    top: 605px;
    display: flex;
    flex-direction: column;
    align-items: center;
}

.fab {
    width: 46px;
    height: 46px;
    border-radius: 50%;
    background: #fff;
    box-shadow: 0 2px 4px rgba(0, 0, 0, .3);
    display: flex;
    align-items: center;
    justify-content: center;
}

.fab svg {
    width: 16px;
    height: 16px;
}

.fab-fit {
    background: #f5f5f5;
}

.fab-plus {
    margin-top: 29px;
}

.fab-minus {
    margin-top: 11px;
}

/* scrollbars */
.vscroll {
    width: 21px;
    background: #f1f1f1;
    display: flex;
    flex-direction: column;
    align-items: center;
    position: relative;
}

.arrow-up {
    margin-top: 8px;
    border: 5px solid transparent;
    border-top: 0;
    border-bottom: 6px solid #505050;
}

.arrow-down {
    margin-top: auto;
    margin-bottom: 4px;
    border: 5px solid transparent;
    border-bottom: 0;
    border-top: 6px solid #505050;
}

.vthumb {
    width: 17px;
    height: 30px;
    margin-top: 294px;
    background: #c1c1c1;
}

.hscroll {
    height: 18px;
    background: #f1f1f1;
    display: flex;
    align-items: center;
}

.arrow-left {
    margin-left: 7px;
    margin-right: 9px;
    border: 5px solid transparent;
    border-left: 0;
    border-right: 6px solid #a0a0a0;
    flex: none;
}

.hthumb {
    width: 1652px;
    height: 18px;
    background: #c1c1c1;
    flex: none;
}

.arrow-right {
    margin-left: auto;
    margin-right: 7px;
    border: 5px solid transparent;
    border-right: 0;
    border-left: 6px solid #505050;
    flex: none;
}

/* taskbar */
.taskbar {
    height: 50px;
    background: linear-gradient(to right, #1f211d, #2c3026 35%, #262b23 65%, #20231e);
    display: flex;
    align-items: stretch;
}

.startbtn {
    width: 60px;
    display: flex;
    align-items: center;
    justify-content: center;
}

.startbtn svg {
    width: 21px;
    height: 21px;
}

.searchbox {
    width: 430px;
    background: #f1f1f1;
    display: flex;
    align-items: center;
    padding-left: 15px;
    font-size: 17.900px;
    color: #222;
}

.searchbox svg {
    width: 20px;
    height: 20px;
    margin-right: 15px;
}

.taskicons {
    display: flex;
}

.ti {
    width: 62px;
    display: flex;
    align-items: center;
    justify-content: center;
    position: relative;
    flex: none;
}

.ti-s {
    width: 20px;
    height: 20px;
}

.ti-l {
    width: 28px;
    height: 28px;
}

.ti-open {
    border-bottom: 3px solid #6eb1e6;
    padding-top: 3px;
}

.ti-active {
    background: #53584f;
}

.tray {
    flex: 1;
    display: flex;
    align-items: center;
    justify-content: flex-end;
    color: #fff;
    padding-right: 28px;
    font-size: 14.500px;
}

.caret {
    width: 16px;
    height: 10px;
}

.battery {
    width: 20px;
    height: 14px;
    margin-left: 11px;
}

.speaker {
    width: 20px;
    height: 18px;
    margin-left: 9px;
}

.wifi {
    width: 18px;
    height: 18px;
    margin-left: 13px;
}

.lang,
.clock {
    display: flex;
    flex-direction: column;
    align-items: center;
    gap: 5px;
    line-height: 17px;
}

.lang {
    margin-left: 12.500px;
}

.clock {
    margin-left: 17px;
}

.notif {
    position: relative;
    margin-left: 23px;
    width: 22px;
    height: 24px;
}

.notif svg {
    width: 20px;
    height: 20px;
}

.badge {
    position: absolute;
    right: -4px;
    bottom: -8px;
    width: 20px;
    height: 20px;
    border-radius: 50%;
    background: #333;
    border: 1px solid #ccc;
    font-size: 13px;
    line-height: 18px;
    text-align: center;
}
```
